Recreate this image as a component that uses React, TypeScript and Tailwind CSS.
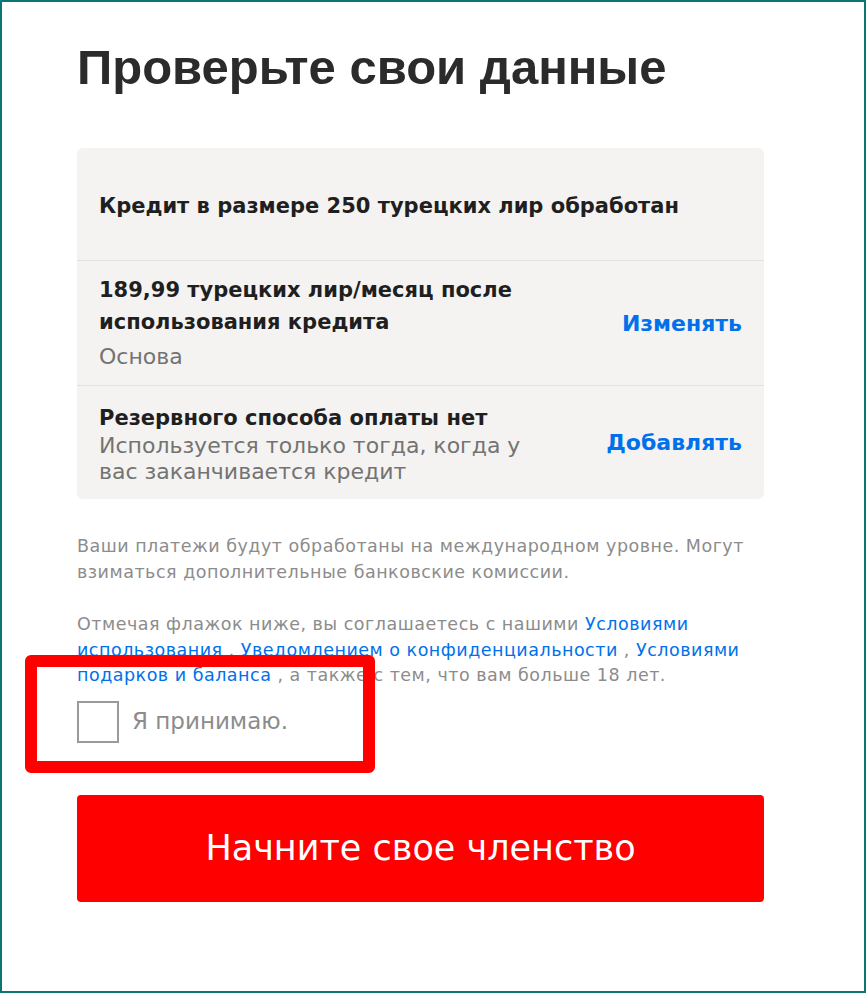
import React from 'react';

const body = { fontFamily: '"DejaVu Sans", Verdana, sans-serif' };

function Row({ children, last }: { children: React.ReactNode; last?: boolean }) {
  return (
    <div className={`flex items-center justify-between px-[22px] ${last ? '' : 'border-b border-[#e3e1df]'}`}>
      {children}
    </div>
  );
}

export default function App() {
  return (
    <div className="relative w-[866px] h-[993px] bg-white border-2 border-[#0b7474] overflow-hidden" style={body}>
      <div className="flex flex-col pl-[75px] pr-[100px]">
        <h1
          className="mt-[36px] text-[49px] leading-[58px] font-bold text-[#2b2b2b]"
          style={{ fontFamily: '"Liberation Sans", Arial, sans-serif' }}
        >
          Проверьте свои данные
        </h1>

        {/* summary card */}
        <div className="mt-[52px] rounded-md bg-[#f4f3f2]">
          <Row>
            <div className="h-[112px] pt-[5px] flex items-center text-[21px] font-bold text-[#1f1f1f]">
              Кредит в размере 250 турецких лир обработан
            </div>
          </Row>
          <Row>
            <div className="h-[124px] flex flex-col justify-center">
              <div className="text-[21px] leading-[32px] font-bold text-[#1f1f1f]">
                189,99 турецких лир/месяц после
                <br />
                использования кредита
              </div>
              <div className="mt-[4px] text-[22px] leading-[30px] text-[#737373]">Основа</div>
            </div>
            <button className="text-[22px] font-bold text-[#0071eb]">Изменять</button>
          </Row>
          <Row last>
            <div className="h-[113px] flex flex-col justify-center pt-[2px]">
              <div className="text-[21px] leading-[30px] font-bold text-[#1f1f1f]">
                Резервного способа оплаты нет
              </div>
              <div className="text-[22px] leading-[26px] text-[#737373]">
                Используется только тогда, когда у
                <br />
                вас заканчивается кредит
              </div>
            </div>
            <button className="text-[22px] font-bold text-[#0071eb]">Добавлять</button>
          </Row>
        </div>

        <p className="mt-[34px] text-[17.5px] leading-[26px] tracking-[0.5px] text-[#8c8c8c]">
          Ваши платежи будут обработаны на международном уровне. Могут взиматься дополнительные
          банковские комиссии.
        </p>

        <p className="mt-[27px] text-[17.5px] leading-[25.5px] tracking-[0.5px] text-[#8c8c8c]">
          Отмечая флажок ниже, вы соглашаетесь с нашими{' '}
          <a className="text-[#0071eb]">Условиями использования</a> ,{' '}
          <a className="text-[#0071eb]">Уведомлением о конфиденциальности</a> ,{' '}
          <a className="text-[#0071eb]">Условиями подарков и баланса</a> , а также с тем, что вам больше 18 лет.
        </p>

        <label className="mt-[12px] flex items-center gap-[13px]">
          <span className="w-[42px] h-[42px] border-2 border-[#9a9a9a] bg-white" />
          <span className="text-[23px] text-[#8c8c8c]">Я принимаю.</span>
        </label>

        <button className="mt-[52px] h-[107px] rounded-[4px] bg-[#fe0000] text-white text-[35px]">
          Начните свое членство
        </button>
      </div>

      {/* annotation highlight */}
      <div className="absolute left-[23px] top-[653px] w-[350px] h-[118px] rounded-md border-[12px] border-[#ff0000]" />
    </div>
  );
}
